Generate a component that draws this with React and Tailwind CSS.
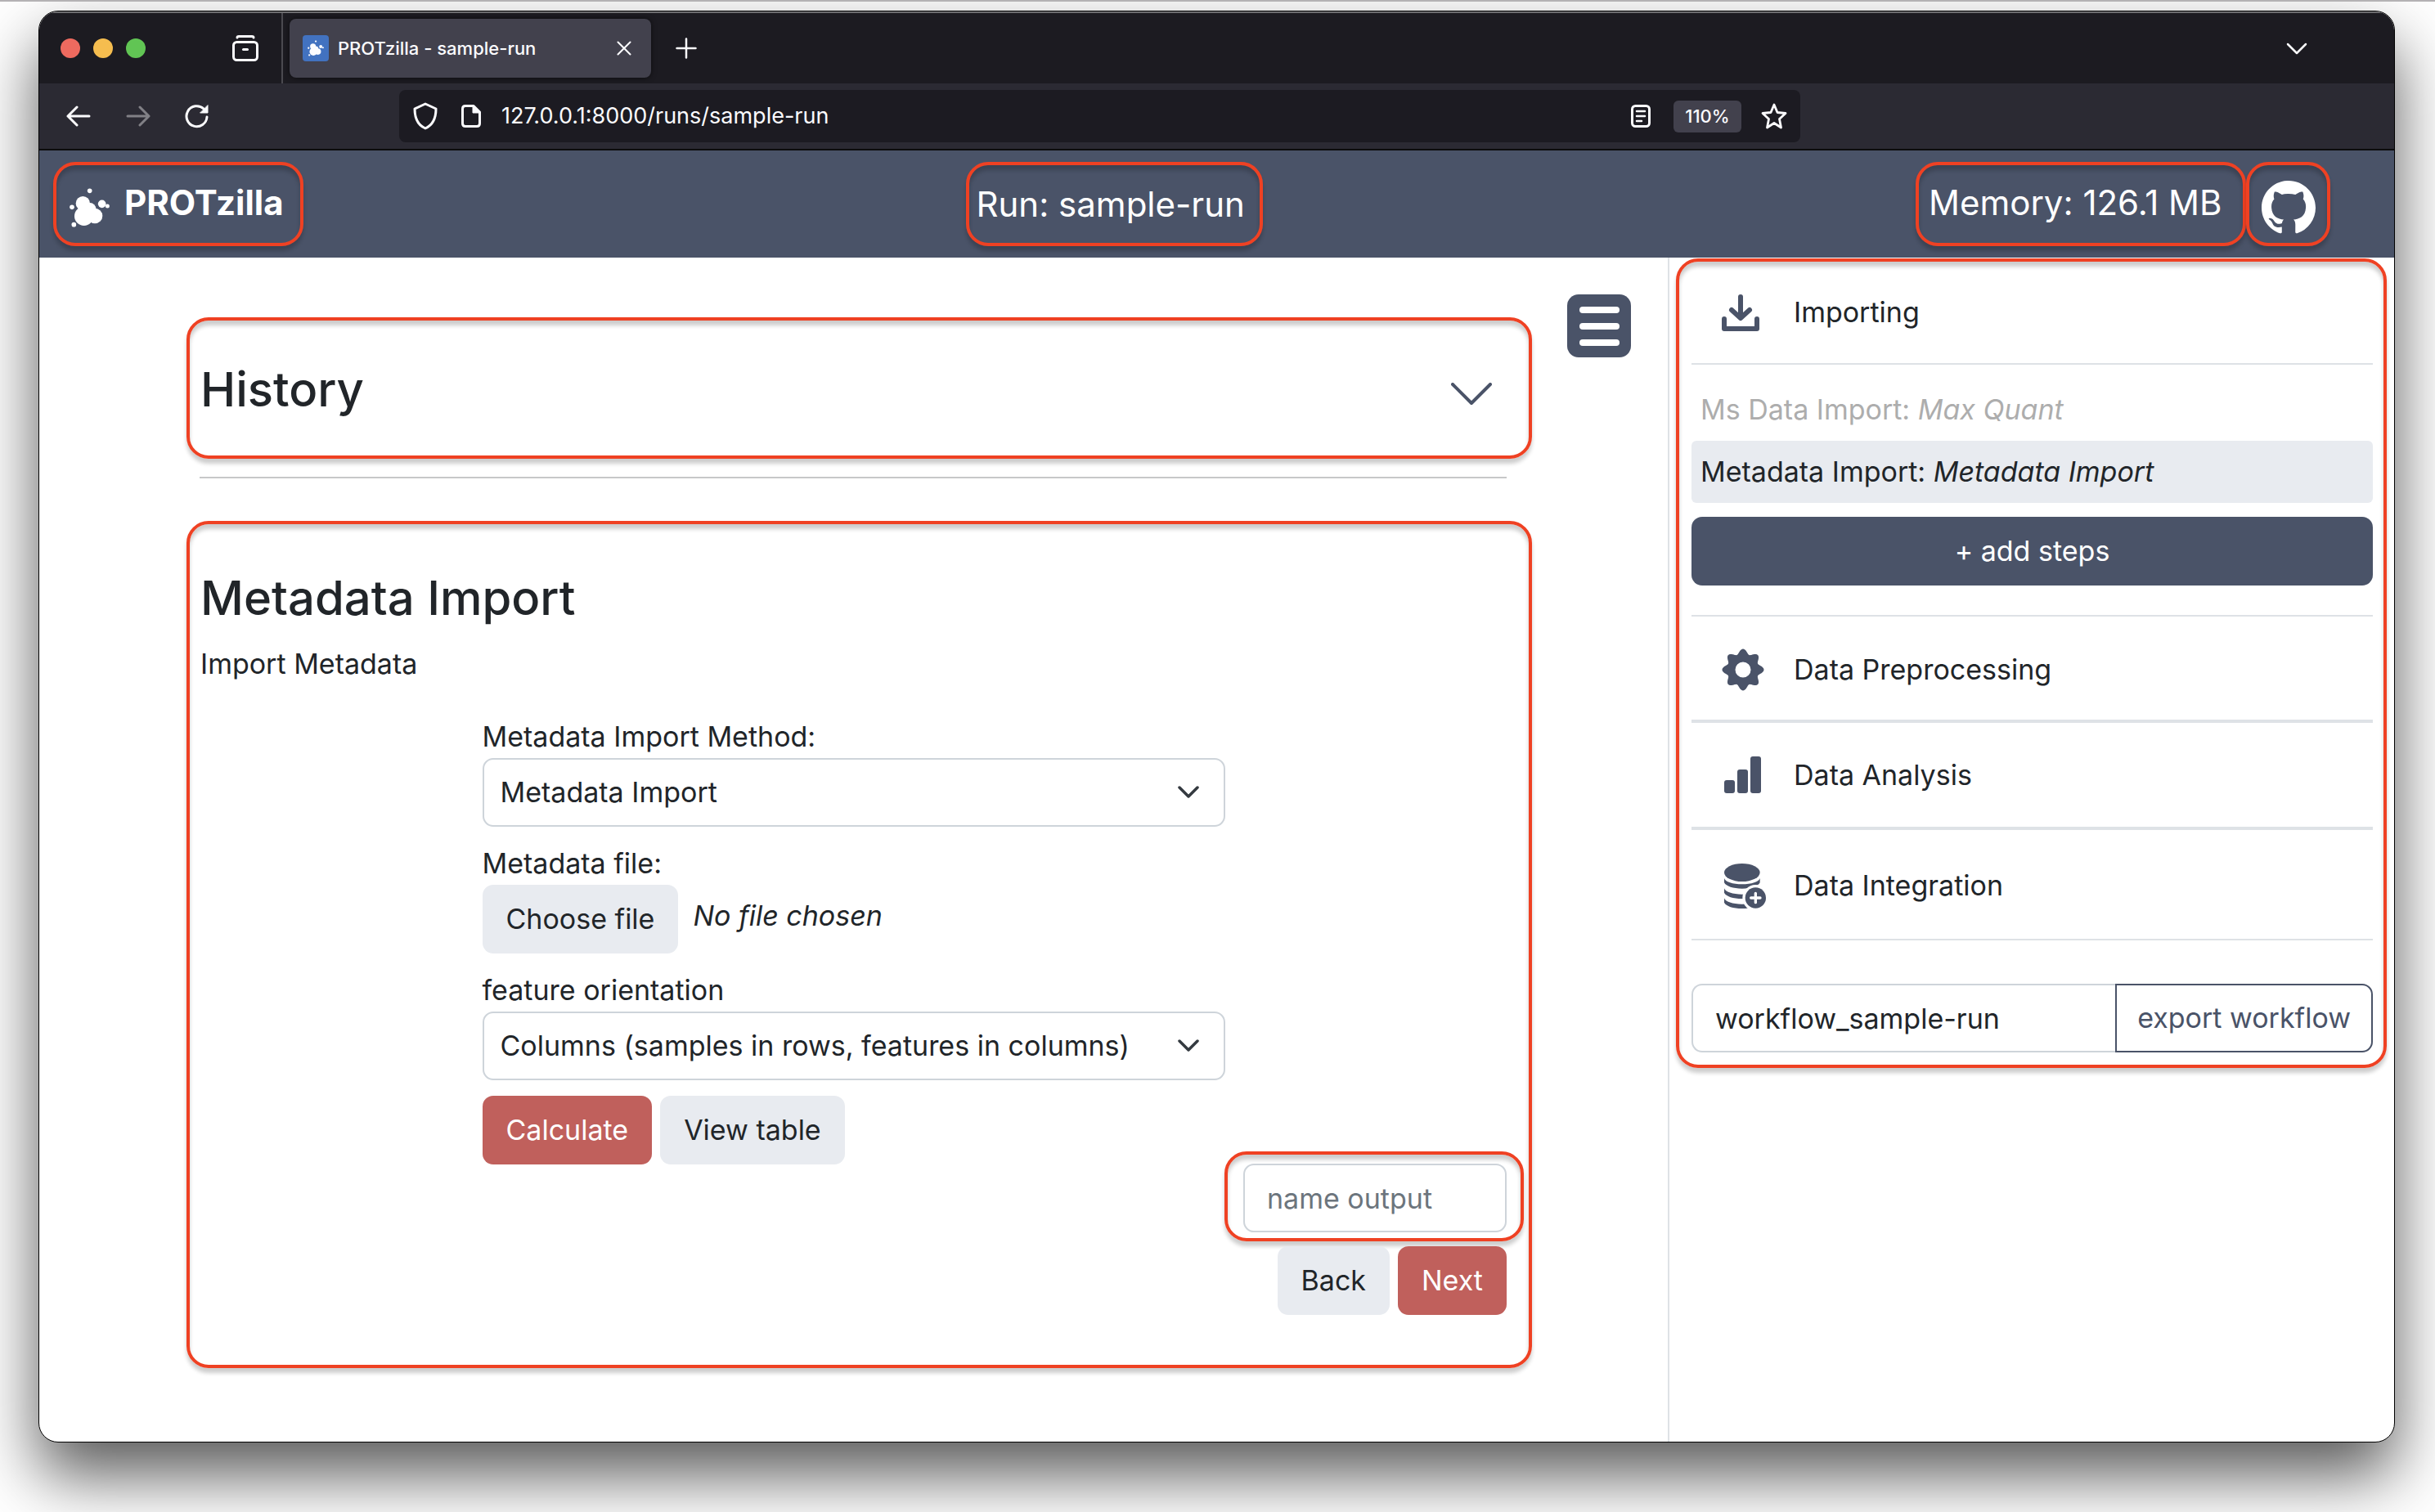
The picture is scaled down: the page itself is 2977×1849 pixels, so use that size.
import React from "react";
import { BsGithub } from "react-icons/bs";

const FRAME =
  "border-4 border-[#ef4123] rounded-[27px] shadow-[0_6px_5px_rgba(0,0,0,0.2),inset_0_6px_5px_rgba(0,0,0,0.2)]";
const BTN = "h-[84px] rounded-[13px] px-[29px] text-[34px] leading-[52px]";
const FIELD =
  "h-[84px] w-full appearance-none rounded-[13px] border-2 border-[#ced4da] bg-white text-[34px] leading-[52px] text-[#212529]";

function gearPath() {
  const points = [];
  for (let i = 0; i < 160; i++) {
    const t = (i / 160) * Math.PI * 2;
    const r = 22.5 + 3 * Math.cos(8 * t);
    points.push(`${(26 + r * Math.cos(t)).toFixed(2)} ${(26 + r * Math.sin(t)).toFixed(2)}`);
  }
  return `M${points.join("L")}ZM35.5 26a9.5 9.5 0 1 0-19 0a9.5 9.5 0 1 0 19 0Z`;
}

function Splat({ className }) {
  return (
    <svg viewBox="75 120 147 142" className={className} fill="currentColor" aria-hidden="true">
      <circle cx="149" cy="129" r="8.5" />
      <circle cx="124" cy="175" r="26" />
      <circle cx="150" cy="195" r="22" />
      <circle cx="128" cy="222" r="35" />
      <circle cx="168" cy="221" r="28" />
      <circle cx="194" cy="177" r="14.5" />
      <circle cx="214" cy="185" r="7.5" />
      <circle cx="84" cy="189" r="8.5" />
      <circle cx="91" cy="253" r="8.5" />
    </svg>
  );
}

function Gear() {
  return (
    <svg viewBox="0 0 52 52" className="h-[52px] w-[52px]" fill="#4a5368" fillRule="evenodd" aria-hidden="true">
      <path d={gearPath()} />
    </svg>
  );
}

function Download() {
  return (
    <svg viewBox="0 0 46 45" className="h-[45px] w-[46px]" fill="none" stroke="#4a5368" strokeWidth="6" strokeLinecap="round" aria-hidden="true">
      <path d="M23 3v24" />
      <path d="M12 19l11 10 11-10" strokeLinejoin="round" />
      <path d="M3 30v12h40V30" strokeLinejoin="round" />
    </svg>
  );
}

function Bars() {
  return (
    <svg viewBox="-3 0 48 45" className="h-[45px] w-[48px]" fill="#4a5368" aria-hidden="true">
      <rect x="0" y="29" width="13" height="16" rx="3" />
      <rect x="16" y="16" width="13" height="29" rx="3" />
      <rect x="32" y="0" width="13" height="45" rx="3" />
    </svg>
  );
}

function Band({ y }) {
  return (
    <path
      transform={`translate(0 ${y})`}
      d="M0 0C3 13 32 22 65.500 22S128 13 131 0V16C124 30 98 38 65.500 38S7 30 0 16Z"
    />
  );
}

function Database() {
  return (
    <svg viewBox="-9 0 165 165" className="h-[55px] w-[55px]" fill="#4a5368" aria-hidden="true">
      <ellipse cx="65.5" cy="33" rx="65.500" ry="33" />
      <Band y={54} />
      <Band y={91} />
      <Band y={127} />
      <circle cx="115" cy="126" r="48" fill="white" />
      <circle cx="115" cy="126" r="38" />
      <path d="M115 109v34M98 126h34" stroke="white" strokeWidth="10" strokeLinecap="round" />
    </svg>
  );
}

function Line({ box, size, d, width = 2, color = "currentColor" }) {
  return (
    <svg viewBox={box} className={`${size} shrink-0`} fill="none" stroke={color} strokeWidth={width} strokeLinecap="round" strokeLinejoin="round" aria-hidden="true">
      <path d={d} />
    </svg>
  );
}

function TabBar() {
  return (
    <div className="flex h-[88px] items-center border-t-2 border-[#6d6d70] bg-[#1c1b21] text-[#fbfbfe]">
      <div className="flex gap-4 pl-[26px]">
        <span className="h-6 w-6 rounded-full bg-[#ee6a5f]" />
        <span className="h-6 w-6 rounded-full bg-[#f5bd4f]" />
        <span className="h-6 w-6 rounded-full bg-[#61c554]" />
      </div>
      <button type="button" aria-label="Recent browsing" className="ml-[106px]">
        <svg viewBox="0 0 32 32" className="h-8 w-8" fill="none" stroke="currentColor" strokeWidth="3" strokeLinecap="round" aria-hidden="true">
          <path d="M6 3q0-1.500 2-1.500h16q2 0 2 1.500" />
          <rect x="1.500" y="8.500" width="29" height="22" rx="4" />
          <path d="M13.500 17.500h5" />
        </svg>
      </button>
      <div className="ml-[28px] h-full w-[2px] bg-[#4b4a50]" />
      <div className="ml-2 flex h-[72px] w-[442px] items-center rounded-lg bg-[#42414d] pl-4 pr-6 shadow-[0_0_6px_rgba(0,0,0,0.6)]">
        <span className="flex h-8 w-8 shrink-0 items-center justify-center rounded bg-[#4272c0]">
          <Splat className="h-5 w-5" />
        </span>
        <span className="ml-[11px] flex-1 whitespace-nowrap text-[22px] font-medium">PROTzilla - sample-run</span>
        <button type="button" aria-label="Close tab">
          <Line box="0 0 18 18" size="h-[18px] w-[18px]" d="M1.500 1.500l15 15M16.500 1.500l-15 15" />
        </button>
      </div>
      <button type="button" aria-label="New tab" className="ml-[30px]">
        <Line box="0 0 26 26" size="h-[26px] w-[26px]" d="M13 1.500v23M1.500 13h23" width={2.5} />
      </button>
      <button type="button" aria-label="List all tabs" className="ml-auto mr-[106px]">
        <Line box="0 0 26 15" size="h-[15px] w-[26px]" d="M2 2l11 11 11-11" width={2.5} />
      </button>
    </div>
  );
}

function NavBar() {
  return (
    <div className="flex h-[82px] items-center border-b-2 border-[#0c0c0d] bg-[#2b2a33] text-[#fbfbfe]">
      <button type="button" aria-label="Back" className="ml-[33px]">
        <Line box="0 0 30 26" size="h-[26px] w-[30px]" d="M28 13H2M13 2L2 13l11 11" width={3} />
      </button>
      <button type="button" aria-label="Forward" className="ml-[43px] text-[#818086]">
        <Line box="0 0 30 26" size="h-[26px] w-[30px]" d="M2 13h26M17 2l11 11-11 11" width={3} />
      </button>
      <button type="button" aria-label="Reload" className="ml-[42px]">
        <svg viewBox="0 0 30 30" className="h-[30px] w-[30px]" fill="none" stroke="currentColor" strokeWidth="3" strokeLinecap="round" strokeLinejoin="round" aria-hidden="true">
          <path d="M27 16A12.500 12.500 0 1 1 23 6l3 3" />
          <path d="M28 2v9h-9z" fill="currentColor" strokeWidth="1" />
        </svg>
      </button>
      <div className="ml-[232px] flex h-16 w-[59.500%] items-center rounded-lg bg-[#1c1b22] pl-[17px] pr-4">
        <Line box="0 0 30 34" size="h-[34px] w-[30px]" d="M15 2L28 8C28 20 24 28 15 32C6 28 2 20 2 8Z" width={3} />
        <svg viewBox="0 0 24 28" className="ml-[29px] h-7 w-6 shrink-0" fill="none" stroke="currentColor" strokeWidth="3" strokeLinejoin="round" aria-hidden="true">
          <path d="M15 1.500H5Q1.500 1.500 1.500 5v18q0 3.500 3.500 3.500h14q3.500 0 3.500-3.500V9z" />
          <path d="M14 2v8h8z" fill="currentColor" strokeWidth="1" />
        </svg>
        <input
          aria-label="Address"
          defaultValue="127.0.0.1:8000/runs/sample-run"
          className="ml-[25px] min-w-0 flex-1 bg-transparent text-[27px] text-[#fbfbfe] outline-none"
        />
        <svg viewBox="0 0 24 28" className="h-7 w-6 shrink-0" fill="none" stroke="currentColor" strokeWidth="3" strokeLinecap="round" aria-hidden="true">
          <rect x="1.500" y="1.500" width="21" height="25" rx="4" />
          <path d="M7 8h10M7 14h10M7 20h6" strokeWidth="2.500" />
        </svg>
        <button type="button" className="ml-[28px] h-[39px] w-[83px] rounded-md bg-[#42414d] text-[22px] font-medium leading-7">110%</button>
        <button type="button" aria-label="Bookmark" className="ml-[24px]">
          <Line
            box="0 0 32 32"
            size="h-8 w-8"
            d="M16 2l4 9.500 10 1-7.500 7 2 10.500L16 24.500 7.500 30l2-10.500L2 12.500l10-1z"
            width={2.8}
          />
        </button>
      </div>
    </div>
  );
}

function Header() {
  return (
    <header className="flex h-[131px] items-center justify-between bg-[#4a5368] pl-[17px] pr-[78px] text-[42px] leading-[52px] text-white">
      <a href="#home" className={`mr-[11px] flex h-[103px] w-[306px] items-center whitespace-nowrap pb-1 pl-4 ${FRAME}`}>
        <Splat className="mt-3 h-[48px] w-[49px] shrink-0" />
        <span className="ml-[18px] font-bold">PROTzilla</span>
      </a>
      <div className={`flex h-[103px] w-[363px] items-center whitespace-nowrap pl-[9px] ${FRAME}`}>Run: sample-run</div>
      <div className="flex">
        <div className={`flex h-[103px] w-[404px] items-center whitespace-nowrap pb-1 pl-[12px] ${FRAME}`}>Memory: 126.1 MB</div>
        <a href="#github" aria-label="GitHub" className={`flex h-[103px] w-[103px] items-center justify-center pt-2 ${FRAME}`}>
          <BsGithub className="h-[66px] w-[66px]" />
        </a>
      </div>
    </header>
  );
}

function Select({ id, label, value }) {
  return (
    <div>
      <label htmlFor={id} className="block">{label}</label>
      <div className="relative">
        <select id={id} defaultValue={value} className={`${FIELD} block pl-5 pr-[90px]`}>
          <option>{value}</option>
        </select>
        <div className="pointer-events-none absolute inset-y-0 right-8 flex items-center">
          <Line box="0 0 26 16" size="h-4 w-[26px]" d="M2 2l11 11L24 2" width={3.5} color="#343a40" />
        </div>
      </div>
    </div>
  );
}

function Main() {
  return (
    <main className="flex min-w-0 flex-1 items-start pl-[180px] pr-[45px] pt-[45px]">
      <div className="min-w-0 flex-1 pt-[28px]">
        <section className={`flex items-center justify-between pb-[45px] pl-[13px] pr-[45px] pt-[48px] ${FRAME}`}>
          <h2 className="text-[58px] font-medium leading-[72px]">History</h2>
          <button type="button" aria-label="Expand history" className="pt-3">
            <Line box="0 0 50 28" size="h-7 w-[50px]" d="M2 2l23 23L48 2" width={4} color="#4a5368" />
          </button>
        </section>
        <hr className="ml-[16px] mr-[31px] mt-[22px] border-t-2 border-[#c7c8c9]" />
        <section className={`mt-[52px] pb-[61px] pl-[13px] pr-[27px] pt-[54px] ${FRAME}`}>
          <h2 className="text-[58px] font-medium leading-[72px]">Metadata Import</h2>
          <p className="mt-[19px]">Import Metadata</p>
          <form className="mx-auto mt-[37px] flex w-full max-w-[908px] flex-col gap-[19px]">
            <Select id="method" label="Metadata Import Method:" value="Metadata Import" />
            <div>
              <label htmlFor="metadata-file" className="block">Metadata file:</label>
              <div className="flex">
                <button id="metadata-file" type="button" className={`${BTN} bg-[#e8ebf0]`}>Choose file</button>
                <i className="ml-[18px] mt-[12px]">No file chosen</i>
              </div>
            </div>
            <Select id="orientation" label="feature orientation" value="Columns (samples in rows, features in columns)" />
            <div className="flex gap-[10px]">
              <button type="button" className={`${BTN} bg-[#c0605c] text-white`}>Calculate</button>
              <button type="button" className={`${BTN} bg-[#e8ebf0]`}>View table</button>
            </div>
          </form>
          <div className="-mt-[16px] flex flex-col items-end">
            <div className={`-mr-[21px] w-[366px] pb-[7px] pl-[19px] pr-[17px] pt-[11px] ${FRAME}`}>
              <input aria-label="name output" placeholder="name output" className={`${FIELD} block px-[27px] placeholder:text-[#6c757d]`} />
            </div>
            <div className="mt-[6px] flex gap-[10px]">
              <button type="button" className={`${BTN} bg-[#e8ebf0]`}>Back</button>
              <button type="button" className={`${BTN} bg-[#c0605c] text-white`}>Next</button>
            </div>
          </div>
        </section>
      </div>
      <button
        type="button"
        aria-label="Toggle sidebar"
        className="ml-[43px] flex h-[77px] w-[78px] shrink-0 flex-col items-center justify-center gap-3 rounded-[14px] bg-[#4a5368]"
      >
        <span className="h-[8px] w-[49px] rounded-full bg-white" />
        <span className="h-[8px] w-[49px] rounded-full bg-white" />
        <span className="h-[8px] w-[49px] rounded-full bg-white" />
      </button>
    </main>
  );
}

function SectionRow({ icon, label, className }) {
  return (
    <button type="button" className={`flex w-full items-center border-[#dee2e6] pl-[37px] text-left ${className}`}>
      <span className="flex w-[55px] shrink-0">{icon}</span>
      <span className="ml-[33px]">{label}</span>
    </button>
  );
}

function Sidebar() {
  return (
    <aside className="w-[888px] shrink-0 border-l-2 border-[#dee2e6] pl-[8px] pr-[9px] pt-px">
      <div className={`pb-[15px] pl-[15px] pr-[13px] ${FRAME}`}>
        <SectionRow icon={<Download />} label="Importing" className="h-[126px] border-b-2" />
        <div className="mt-[17px] flex h-[76px] items-center whitespace-pre px-[11px] text-[#adadad]">
          Ms Data Import: <i>Max Quant</i>
        </div>
        <div className="flex h-[76px] items-center whitespace-pre rounded-md bg-[#e8ebf0] px-[11px]">
          Metadata Import: <i>Metadata Import</i>
        </div>
        <button type="button" className={`${BTN} mt-[17px] w-full bg-[#4a5368] text-white`}>+ add steps</button>
        <SectionRow icon={<Gear />} label="Data Preprocessing" className="mt-[36px] h-[132px] border-b-4 border-t-2 pt-[3px]" />
        <SectionRow icon={<Bars />} label="Data Analysis" className="h-[131px] border-b-4" />
        <SectionRow icon={<Database />} label="Data Integration" className="h-[135px] border-b-2 pt-[3px]" />
        <div className="mt-[53px] flex text-[34px]">
          <input
            aria-label="Workflow name"
            defaultValue="workflow_sample-run"
            className="h-[84px] min-w-0 flex-1 rounded-l-[13px] border-2 border-r-0 border-[#ced4da] px-[27px]"
          />
          <button type="button" className="h-[84px] shrink-0 rounded-r-[13px] border-2 border-[#4a5368] px-[25px] text-[#4a5368]">
            export workflow
          </button>
        </div>
      </div>
    </aside>
  );
}

export default function App() {
  return (
    <div className="flex min-h-screen flex-col overflow-hidden border-t-2 border-[#b4b2b4] bg-white pb-[85px] pl-[47px] pr-[49px] pt-[11px] font-['Inter',sans-serif] text-[34px] leading-[52px] text-[#212529]">
      <div className="flex flex-1 flex-col overflow-hidden rounded-[24px] border border-black bg-white shadow-[0_40px_80px_rgba(0,0,0,0.65)]">
        <TabBar />
        <NavBar />
        <Header />
        <div className="flex flex-1">
          <Main />
          <Sidebar />
        </div>
      </div>
    </div>
  );
}
